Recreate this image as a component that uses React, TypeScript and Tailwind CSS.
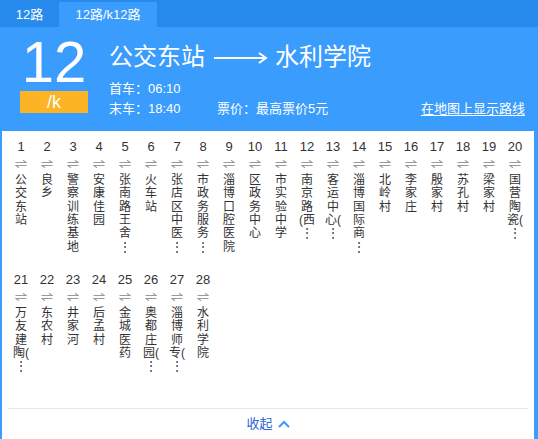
import React from "react";

const stations: string[][] = [
  ["公", "交", "东", "站"],
  ["良", "乡"],
  ["警", "察", "训", "练", "基", "地"],
  ["安", "康", "佳", "园"],
  ["张", "南", "路", "王", "舍", "⋮"],
  ["火", "车", "站"],
  ["张", "店", "区", "中", "医", "⋮"],
  ["市", "政", "务", "服", "务", "⋮"],
  ["淄", "博", "口", "腔", "医", "院"],
  ["区", "政", "务", "中", "心"],
  ["市", "实", "验", "中", "学"],
  ["南", "京", "路", "(西", "⋮"],
  ["客", "运", "中", "心(", "⋮"],
  ["淄", "博", "国", "际", "商", "⋮"],
  ["北", "岭", "村"],
  ["李", "家", "庄"],
  ["殷", "家", "村"],
  ["苏", "孔", "村"],
  ["梁", "家", "村"],
  ["国", "营", "陶", "瓷(", "⋮"],
  ["万", "友", "建", "陶(", "⋮"],
  ["东", "农", "村"],
  ["井", "家", "河"],
  ["后", "孟", "村"],
  ["金", "城", "医", "药"],
  ["奥", "都", "庄", "园(", "⋮"],
  ["淄", "博", "师", "专(", "⋮"],
  ["水", "利", "学", "院"],
];

function Swap() {
  return (
    <svg width="12" height="8" viewBox="0 0 12 8" className="block">
      <path d="M0.5 2.5 H11 L8 0.3" fill="none" stroke="#9a9a9a" strokeWidth="1.1" />
      <path d="M11.5 5.5 H1 L4 7.7" fill="none" stroke="#9a9a9a" strokeWidth="1.1" />
    </svg>
  );
}

export default function App() {
  return (
    <div className="w-[538px] h-[439px] overflow-hidden bg-white flex flex-col font-['Liberation_Sans','Noto_Sans_CJK_SC',sans-serif]">
      {/* tabs */}
      <div className="h-[27px] shrink-0 bg-[#268bed] flex items-end text-[13px] text-white">
        <div className="w-[59px] h-[25px] flex items-center justify-center">12路</div>
        <div className="w-[98px] h-[25px] flex items-center justify-center bg-[#3a9cfc]">12路/k12路</div>
      </div>
      {/* header */}
      <div className="h-[104px] shrink-0 bg-[#3a9cfc] flex text-white pl-[20px] pr-[13px]">
        <div className="w-[68px] flex flex-col pt-[6px]">
          <div className="text-[58px] leading-[58px] h-[58px] text-center">12</div>
          <div className="h-[22px] bg-[#fcb324] text-[18px] leading-[22px] text-center">/k</div>
        </div>
        <div className="ml-[21px] flex-1 flex flex-col pt-[18px]">
          <div className="flex items-center h-[24px] text-[24px] leading-[24px]">
            <span>公交东站</span>
            <svg width="54" height="14" viewBox="0 0 54 14" className="ml-[9px] mr-[7px] mt-[1px]">
              <path d="M0 7 H51" stroke="white" strokeWidth="2" />
              <path d="M45 2 L52 7 L45 12" fill="none" stroke="white" strokeWidth="2" />
            </svg>
            <span>水利学院</span>
          </div>
          <div className="mt-[10px] text-[13px] leading-[20px] h-[20px]">首车：06:10</div>
          <div className="flex text-[13px] leading-[20px] h-[20px]">
            <span className="w-[108px]">末车：18:40</span>
            <span>票价：最高票价5元</span>
            <span className="ml-auto underline underline-offset-2">在地图上显示路线</span>
          </div>
        </div>
      </div>
      {/* body */}
      <div className="flex-1 flex flex-col border-l-2 border-r-4 border-[#3a9cfc]">
        <div className="pl-[6px] pt-[8px] flex flex-wrap w-[532px]">
          {stations.map((lines, i) => (
            <div key={i} className="w-[26px] h-[133px] flex flex-col items-center text-[#333]">
              <div className="text-[13px] leading-[16px] h-[16px]">{i + 1}</div>
              <div className="mt-[5px]">
                <Swap />
              </div>
              <div className="mt-[6px] flex flex-col items-center text-[12px] leading-[13.33px]">
                {lines.map((c, j) => (
                  <div key={j} className="h-[13.33px] whitespace-nowrap">
                    {c}
                  </div>
                ))}
              </div>
            </div>
          ))}
        </div>
        <div className="mt-[3px] mx-[6px] h-px bg-[#e6e6e6]" />
        <div className="h-[30px] flex items-center justify-center text-[13px] text-[#2b66d6]">
          <span>收起</span>
          <svg width="12" height="8" viewBox="0 0 12 8" className="ml-[5px]">
            <path d="M1 7 L6 2 L11 7" fill="none" stroke="#3a9cfc" strokeWidth="2" />
          </svg>
        </div>
      </div>
    </div>
  );
}
